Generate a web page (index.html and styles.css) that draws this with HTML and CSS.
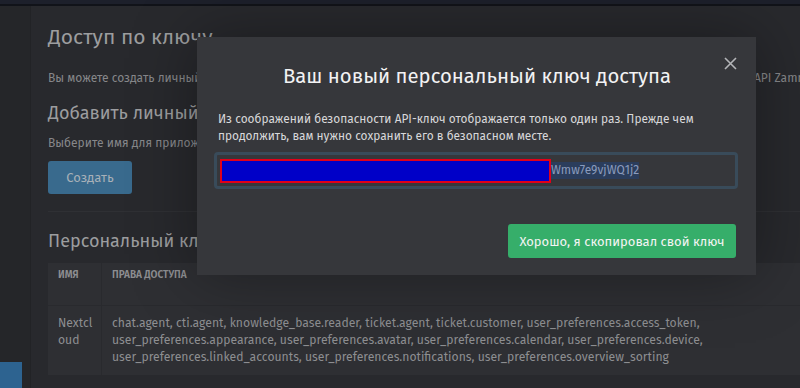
FILE: index.html
```html
<!DOCTYPE html>
<html lang="ru">
<head>
    <meta charset="UTF-8">
    <meta name="viewport" content="width=device-width, initial-scale=1.0">
    <title>Доступ по ключу</title>
    <link rel="stylesheet" href="styles.css">
</head>
<body>
    <div class="topbar"></div>
    <div class="layout">
        <div class="sidebar">
            <div class="sidebar-btn"></div>
        </div>
        <div class="main">
            <h1>Доступ по ключу</h1>
            <p class="note">Вы можете создать личный ключ доступа для любого используемого вами внешнего приложения, которому нужен доступ к API Zammad.</p>

            <h2>Добавить личный ключ доступа</h2>
            <p class="note">Выберите имя для приложения и права доступа.</p>
            <button class="btn-create">Создать</button>

            <hr class="divider">

            <h2>Персональный ключ доступа</h2>
            <table class="tokens">
                <thead>
                    <tr>
                        <th class="col-name">Имя</th>
                        <th>Права доступа</th>
                    </tr>
                </thead>
                <tbody>
                    <tr>
                        <td class="col-name">Nextcloud</td>
                        <td>chat.agent, cti.agent, knowledge_base.reader, ticket.agent, ticket.customer, user_preferences.access_token, user_preferences.appearance, user_preferences.avatar, user_preferences.calendar, user_preferences.device, user_preferences.linked_accounts, user_preferences.notifications, user_preferences.overview_sorting</td>
                    </tr>
                </tbody>
            </table>
        </div>
    </div>

    <div class="modal">
        <button class="modal-close" aria-label="Закрыть">
            <svg width="13" height="13" viewBox="0 0 13 13"><path d="M1 1L12 12M12 1L1 12" stroke="#b4b5b8" stroke-width="1.6" fill="none"/></svg>
        </button>
        <h3 class="modal-title">Ваш новый персональный ключ доступа</h3>
        <p class="modal-text">Из соображений безопасности API-ключ отображается только один раз. Прежде чем продолжить, вам нужно сохранить его в безопасном месте.</p>
        <div class="key-field">
            <span class="key-mask"></span><span class="key-tail">Wmw7e9vjWQ1j2</span>
        </div>
        <div class="modal-footer">
            <button class="btn-ok">Хорошо, я скопировал свой ключ</button>
        </div>
    </div>
</body>
</html>
```

FILE: styles.css
```css
body {
    margin: 0;
    background-color: #242528;
    font-family: "Fira Sans", "Open Sans", "Noto Sans", sans-serif;
    height: 388px;
    overflow: hidden;
}
.topbar {
    height: 4px;
    background: #1d202b;
    border-bottom: 2px solid #111319;
}
.layout {
    display: flex;
    height: 382px;
}
.sidebar {
    width: 30px;
    background: #252629;
    border-right: 1px solid #222326;
    display: flex;
    flex-direction: column;
    justify-content: flex-end;
}
.sidebar-btn {
    width: 22px;
    height: 26px;
    background: #2d6390;
}
.main {
    flex: 1;
    background: #28292d;
    padding: 0 0 0 17px;
    white-space: nowrap;
    overflow: hidden;
}
h1 {
    font-size: 21px;
    font-weight: 400;
    color: #9c9d9f;
    margin: 18px 0 0;
}
h2 {
    font-size: 18px;
    font-weight: 400;
    color: #9c9d9f;
    margin: 17px 0 0;
}
.note {
    font-size: 12px;
    color: #86878a;
    margin: 16px 0 0;
}
h1 + .note {
    margin: 21px 0 0;
}
h2 + .note {
    margin: 12px 0 0;
}
.btn-create {
    margin-top: 11px;
    width: 84px;
    height: 33px;
    background: #396a8d;
    color: #a7b0b8;
    border: none;
    border-radius: 3px;
    font-family: inherit;
    font-size: 13px;
}
.divider {
    border: none;
    border-top: 1px solid #2f3034;
    margin: 17px 0 0;
}
.divider + h2 {
    margin-top: 18px;
}
.tokens {
    margin-top: 11px;
    width: 100%;
    border-collapse: collapse;
    background: #2e2f33;
    white-space: normal;
}
.tokens th {
    text-align: left;
    font-size: 10px;
    font-weight: 600;
    text-transform: uppercase;
    color: #8d8e91;
    padding: 6px 10px 24px;
    height: 12px;
}
.tokens td {
    font-size: 12.2px;
    line-height: 17px;
    color: #8d8e91;
    padding: 9px 60px 9px 10px;
    vertical-align: top;
    border-top: 1px solid #292a2e;
}
.tokens .col-name {
    width: 40px;
    padding-right: 3px;
    border-right: 1px solid #292a2e;
    word-break: break-all;
}
.modal {
    position: absolute;
    left: 197px;
    top: 37px;
    width: 559px;
    height: 238px;
    box-sizing: border-box;
    background: #36373b;
    padding: 0 20px 0 21px;
    box-shadow: 0 0 60px rgba(0, 0, 0, 0.35);
}
.modal-close {
    position: absolute;
    right: 19px;
    top: 20px;
    background: none;
    border: none;
    padding: 0;
    cursor: pointer;
}
.modal-title {
    margin: 27px 0 0;
    text-align: center;
    font-size: 20.3px;
    font-weight: 400;
    color: #f2f2f3;
}
.modal-text {
    margin: 23px 0 0;
    font-size: 11.9px;
    line-height: 17px;
    color: #d8d8da;
}
.key-field {
    margin: 7px -2px 0 -4px;
    height: 31px;
    border: 3px solid #394b5a;
    border-radius: 4px;
    display: flex;
    align-items: center;
    padding-left: 3px;
}
.key-mask {
    width: 327px;
    height: 20px;
    background: #0000c8;
    border: 2px solid #e0001a;
}
.key-tail {
    font-size: 12px;
    color: #8a9bbd;
    background: #2b3d5c;
    line-height: 17px;
}
.modal-footer {
    display: flex;
    justify-content: flex-end;
    margin-top: 35px;
}
.btn-ok {
    width: 228px;
    height: 34px;
    background: #36ae6a;
    color: #f4f4f4;
    border: none;
    border-radius: 3px;
    font-family: inherit;
    font-size: 13px;
}
```
